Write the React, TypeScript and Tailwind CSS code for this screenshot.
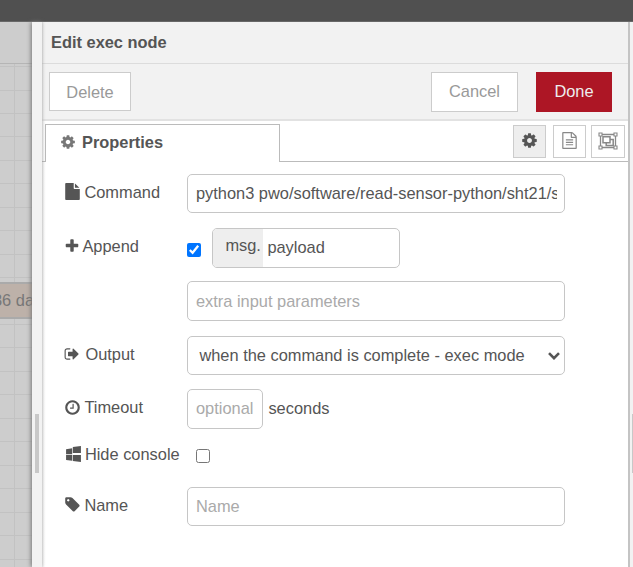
import React from 'react';

type IconProps = { className?: string };

const paths = {
  cog: 'M1152 896q0-106-75-181t-181-75-181 75-75 181 75 181 181 75 181-75 75-181zm512-109v222q0 12-8 23t-20 13l-185 28q-19 54-39 91 35 50 107 138 10 12 10 25t-9 23q-27 37-99 108t-94 71q-12 0-26-9l-138-108q-44 23-91 38-16 136-29 186-7 28-36 28h-222q-14 0-24.5-8.5t-11.5-21.5l-28-184q-49-16-90-37l-141 107q-10 9-25 9-14 0-25-11-126-114-165-168-7-10-7-23 0-12 8-23 15-21 51-66.5t54-70.5q-27-50-41-99l-183-27q-13-2-21-12.5t-8-23.5v-222q0-12 8-23t19-13l186-28q14-46 39-92-40-57-107-138-10-12-10-24 0-10 9-23 26-36 98.5-107.5t94.5-71.5q13 0 26 10l138 107q44-23 91-38 16-136 29-186 7-28 36-28h222q14 0 24.5 8.5t11.5 21.5l28 184q49 16 90 37l142-107q9-9 24-9 13 0 25 10 129 119 165 170 7 8 7 22 0 12-8 23-15 21-51 66.5t-54 70.5q26 50 41 98l183 28q13 2 21 12.5t8 23.5z',
  file: 'M1152 512v-472q22 14 36 28l408 408q14 14 28 36h-472zm-128 32q0 40 28 68t68 28h544v1056q0 40-28 68t-68 28h-1344q-40 0-68-28t-28-68v-1600q0-40 28-68t68-28h800v544z',
  fileText: 'M1596 380q28 28 48 76t20 88v1152q0 40-28 68t-68 28h-1344q-40 0-68-28t-28-68v-1600q0-40 28-68t68-28h896q40 0 88 20t76 48zm-444-244v376h376q-10-29-22-41l-313-313q-12-12-41-22zm384 1528v-1024h-416q-40 0-68-28t-28-68v-416h-768v1536h1280zm-1024-864q0-14 9-23t23-9h704q14 0 23 9t9 23v64q0 14-9 23t-23 9h-704q-14 0-23-9t-9-23v-64zm736 224q14 0 23 9t9 23v64q0 14-9 23t-23 9h-704q-14 0-23-9t-9-23v-64q0-14 9-23t23-9h704zm0 256q14 0 23 9t9 23v64q0 14-9 23t-23 9h-704q-14 0-23-9t-9-23v-64q0-14 9-23t23-9h704z',
  plus: 'M1600 736v192q0 40-28 68t-68 28h-416v416q0 40-28 68t-68 28h-192q-40 0-68-28t-28-68v-416h-416q-40 0-68-28t-28-68v-192q0-40 28-68t68-28h416v-416q0-40 28-68t68-28h192q40 0 68 28t28 68v416h416q40 0 68 28t28 68z',
  signOut: 'M704 1440q0 4 1 20t.5 26.5-3 23.5-10 19.5-20.5 6.5h-320q-119 0-203.5-84.5t-84.5-203.5v-704q0-119 84.5-203.5t203.5-84.5h320q13 0 22.5 9.5t9.5 22.5q0 4 1 20t.5 26.5-3 23.5-10 19.5-20.5 6.5h-320q-66 0-113 47t-47 113v704q0 66 47 113t113 47h312l11.5 1 11.5 3 8 5.5 7 9 2 13.5zm928-544q0 26-19 45l-544 544q-19 19-45 19t-45-19-19-45v-288h-448q-26 0-45-19t-19-45v-384q0-26 19-45t45-19h448v-288q0-26 19-45t45-19 45 19l544 544q19 19 19 45z',
  clock: 'M1024 544v448q0 14-9 23t-23 9h-320q-14 0-23-9t-9-23v-64q0-14 9-23t23-9h224v-352q0-14 9-23t23-9h64q14 0 23 9t9 23zm416 352q0-148-73-273t-198-198-273-73-273 73-198 198-73 273 73 273 198 198 273 73 273-73 198-198 73-273zm224 0q0 209-103 385.5t-279.5 279.5-385.5 103-385.5-103-279.5-279.5-103-385.5 103-385.5 279.5-279.5 385.5-103 385.5 103 279.5 279.5 103 385.5z',
  windows: 'M746 1006v651l-682-94v-557h682zm0-743v659h-682v-565zm982 743v786l-907-125v-661h907zm0-1006v794h-907v-669z',
  tag: 'M576 448q0-53-37.5-90.5t-90.5-37.5-90.5 37.5-37.5 90.5 37.5 90.5 90.5 37.5 90.5-37.5 37.5-90.5zm1067 576q0 53-37 90l-491 492q-39 37-91 37-53 0-90-37l-715-716q-38-37-64.5-101t-26.5-117v-416q0-52 38-90t90-38h416q53 0 117 26.5t102 64.5l715 714q37 39 37 91z',
};

function Icon({ name, className = '' }: IconProps & { name: keyof typeof paths }) {
  return (
    <svg viewBox="0 0 1792 1792" fill="currentColor" className={`shrink-0 ${className}`}>
      <path d={paths[name]} />
    </svg>
  );
}

function ObjectGroup({ className = '' }: IconProps) {
  return (
    <svg viewBox="0 0 20 18" fill="none" stroke="currentColor" className={className}>
      <path d="M4 2.5h12M4 15.5h12M2.5 4v10M17.5 4v10" strokeWidth="1.3" />
      <path d="M1 1h3v3H1zM16 1h3v3h-3zM1 14h3v3H1zM16 14h3v3h-3z" strokeWidth="1.1" />
      <path d="M5 4.8h7v6H5zM12.5 7.5h2.7v6H8.2v-2.2" strokeWidth="1.5" />
    </svg>
  );
}

function Label({ icon, iconClass, children }: { icon: keyof typeof paths; iconClass: string; children: React.ReactNode }) {
  return (
    <div className="flex h-[35px] w-[122px] shrink-0 items-center whitespace-nowrap">
      <Icon name={icon} className={iconClass} />
      <span>{children}</span>
    </div>
  );
}

const field = 'block rounded-[5px] border border-[#c6c6c6] bg-white px-[7.6px] text-[#555] outline-none placeholder:text-[#aaa] placeholder:opacity-100';
const tool = 'flex h-[33px] w-[33px] items-center justify-center border border-[#ccc]';

export default function App() {
  return (
    <div className="flex h-[567px] w-[633px] flex-col overflow-hidden bg-white font-['Liberation_Sans',Arial,sans-serif] text-[16.4px] leading-[24px] text-[#555]">
      <div className="h-[22px] shrink-0 border-b border-[#686868] bg-[#505050]" />
      <div className="flex min-h-0 flex-1">
        <div className="flex w-[32px] shrink-0 flex-col bg-[#cdcdcd]">
          <div className="h-[42px] shrink-0 border-b border-[#b5b5b5]" />
          <div className="flex-1 overflow-hidden bg-[linear-gradient(to_right,transparent_14px,#c2c2c2_14px,#c2c2c2_15px,transparent_15px),repeating-linear-gradient(to_bottom,transparent_0px,transparent_22.45px,#c2c2c2_22.45px,#c2c2c2_23.45px)] bg-[position:0_0,0_-20.4px] bg-[size:100%_100%,100%_600px] pt-[218px]">
            <div className="flex h-[37px] items-center overflow-hidden whitespace-nowrap border-y-2 border-[#aaa] bg-[#bdb1a9] text-[#777]">
              <span className="-ml-[7px] -mt-[2px]">36 da</span>
            </div>
          </div>
        </div>
        <div className="z-10 flex w-[10px] shrink-0 items-center bg-[#f2f2f2] pl-[3px] pt-[297px] shadow-[-1px_0_4px_#777]">
          <div className="h-[59px] w-[4px] bg-[#c8c8c8]" />
        </div>
        <div className="flex w-[588px] shrink-0 flex-col border-r-2 border-[#c4c4c4] bg-[linear-gradient(to_right,#f0f0f0,#ffffff_3px)]">
          <div className="flex h-[42px] shrink-0 items-center border-b border-[#dcdcdc] bg-[linear-gradient(to_right,#e8e8e8,#f2f2f2_2px)] pb-[2px] pl-[9px] font-bold">Edit exec node</div>
          <div className="flex h-[57px] shrink-0 items-center border-b-2 border-[#e2e2e2] bg-[linear-gradient(to_right,#e8e8e8,#f2f2f2_2px)] pl-[7px] text-[#999]">
            <button className="h-[39px] w-[82px] border border-[#ccc] bg-white pt-px">Delete</button>
            <button className="ml-auto h-[40px] w-[87px] border border-[#ccc] bg-white pb-[2px]">Cancel</button>
            <button className="ml-[18px] mr-[16px] h-[40px] w-[76px] bg-[#ad1625] pb-[2px] text-[#eee]">Done</button>
          </div>
          <div className="flex h-[41px] shrink-0 pt-[3px]">
            <div className="w-[3px] border-b border-[#bbb]" />
            <div className="flex w-[235px] items-center border-x border-t border-[#bbb] pb-[3px] pl-[14px] font-bold">
              <Icon name="cog" className="mr-[6px] h-[16px] w-[16px] text-[#777]" />Properties
            </div>
            <div className="flex flex-1 justify-end border-b border-[#bbb] pr-[3px] pt-[1px]">
              <div className={`${tool} mr-[7px] bg-[#eee]`}><Icon name="cog" className="mb-[2px] h-[17px] w-[17px]" /></div>
              <div className={`${tool} mr-[6px] text-[#888]`}><Icon name="fileText" className="mb-[2px] h-[17px] w-[17px]" /></div>
              <div className={`${tool} -ml-px w-[34px] text-[#888]`}><ObjectGroup className="mb-[2px] h-[18px] w-[20px]" /></div>
            </div>
          </div>
          <div className="flex flex-col pl-[23.4px] pt-[12px]">
            <div className="flex h-[54px]">
              <Label icon="file" iconClass="mr-[3px] h-[17px] w-[17px] -ml-[1px]">Command</Label>
              <input className={`${field} h-[39px] w-[378px]`} defaultValue="python3 pwo/software/read-sensor-python/sht21/sht21.py" />
            </div>
            <div className="flex h-[53px]">
              <Label icon="plus" iconClass="mr-[2px] h-[16px] w-[16px] -ml-[1px]">Append</Label>
              <input type="checkbox" defaultChecked className="mt-[15px] h-[14px] w-[14px]" />
              <div className="ml-[11px] flex h-[40px] w-[188px] overflow-hidden rounded-[5px] border border-[#c6c6c6]">
                <div className="w-[50px] bg-[#eee] pl-[12px] pt-[4px]">msg.</div>
                <input className="w-[130px] pb-[3px] pl-[4px] outline-none" defaultValue="payload" />
              </div>
            </div>
            <div className="flex h-[55px] pl-[122px]">
              <input className={`${field} h-[40px] w-[378px]`} placeholder="extra input parameters" />
            </div>
            <div className="flex h-[53px]">
              <Label icon="signOut" iconClass="mr-[5px] h-[16px] w-[16px] -ml-[1px]">Output</Label>
              <div className="grid">
                <select className={`${field} col-start-1 row-start-1 h-[39px] w-[378px] appearance-none pb-[2px] pl-[11px]`}><option>when the command is complete - exec mode</option></select>
                <svg viewBox="0 0 12 8" fill="none" stroke="#555" strokeWidth="2.6" className="pointer-events-none col-start-1 row-start-1 mr-[5px] mt-[16px] h-[8px] w-[12px] justify-self-end"><path d="M1 1.2l5 5 5-5" /></svg>
              </div>
            </div>
            <div className="flex h-[54px]">
              <Label icon="clock" iconClass="mt-px mr-[3px] h-[17px] w-[17px] -ml-[1px]">Timeout</Label>
              <input className={`${field} h-[40px] w-[76px] pb-[1px]`} placeholder="optional" />
              <span className="ml-[5px] pt-[7px]">seconds</span>
            </div>
            <div className="flex h-[44px]">
              <div className="-mt-[7px] flex"><Label icon="windows" iconClass="mr-[3px] h-[16px] w-[17px] -ml-[0.5px]">Hide console</Label></div>
              <input type="checkbox" className="ml-[9px] mt-[6px] h-[14px] w-[14px]" />
            </div>
            <div className="flex h-[54px]">
              <Label icon="tag" iconClass="mr-[3px] h-[17px] w-[17px] -ml-[1px]">Name</Label>
              <input className={`${field} h-[39px] w-[378px]`} placeholder="Name" />
            </div>
          </div>
        </div>
        <div className="flex flex-1 items-center bg-[#f2f2f2] pl-[2px] pt-[297px]"><div className="h-[59px] w-px bg-[#c8c8c8]" /></div>
      </div>
    </div>
  );
}
